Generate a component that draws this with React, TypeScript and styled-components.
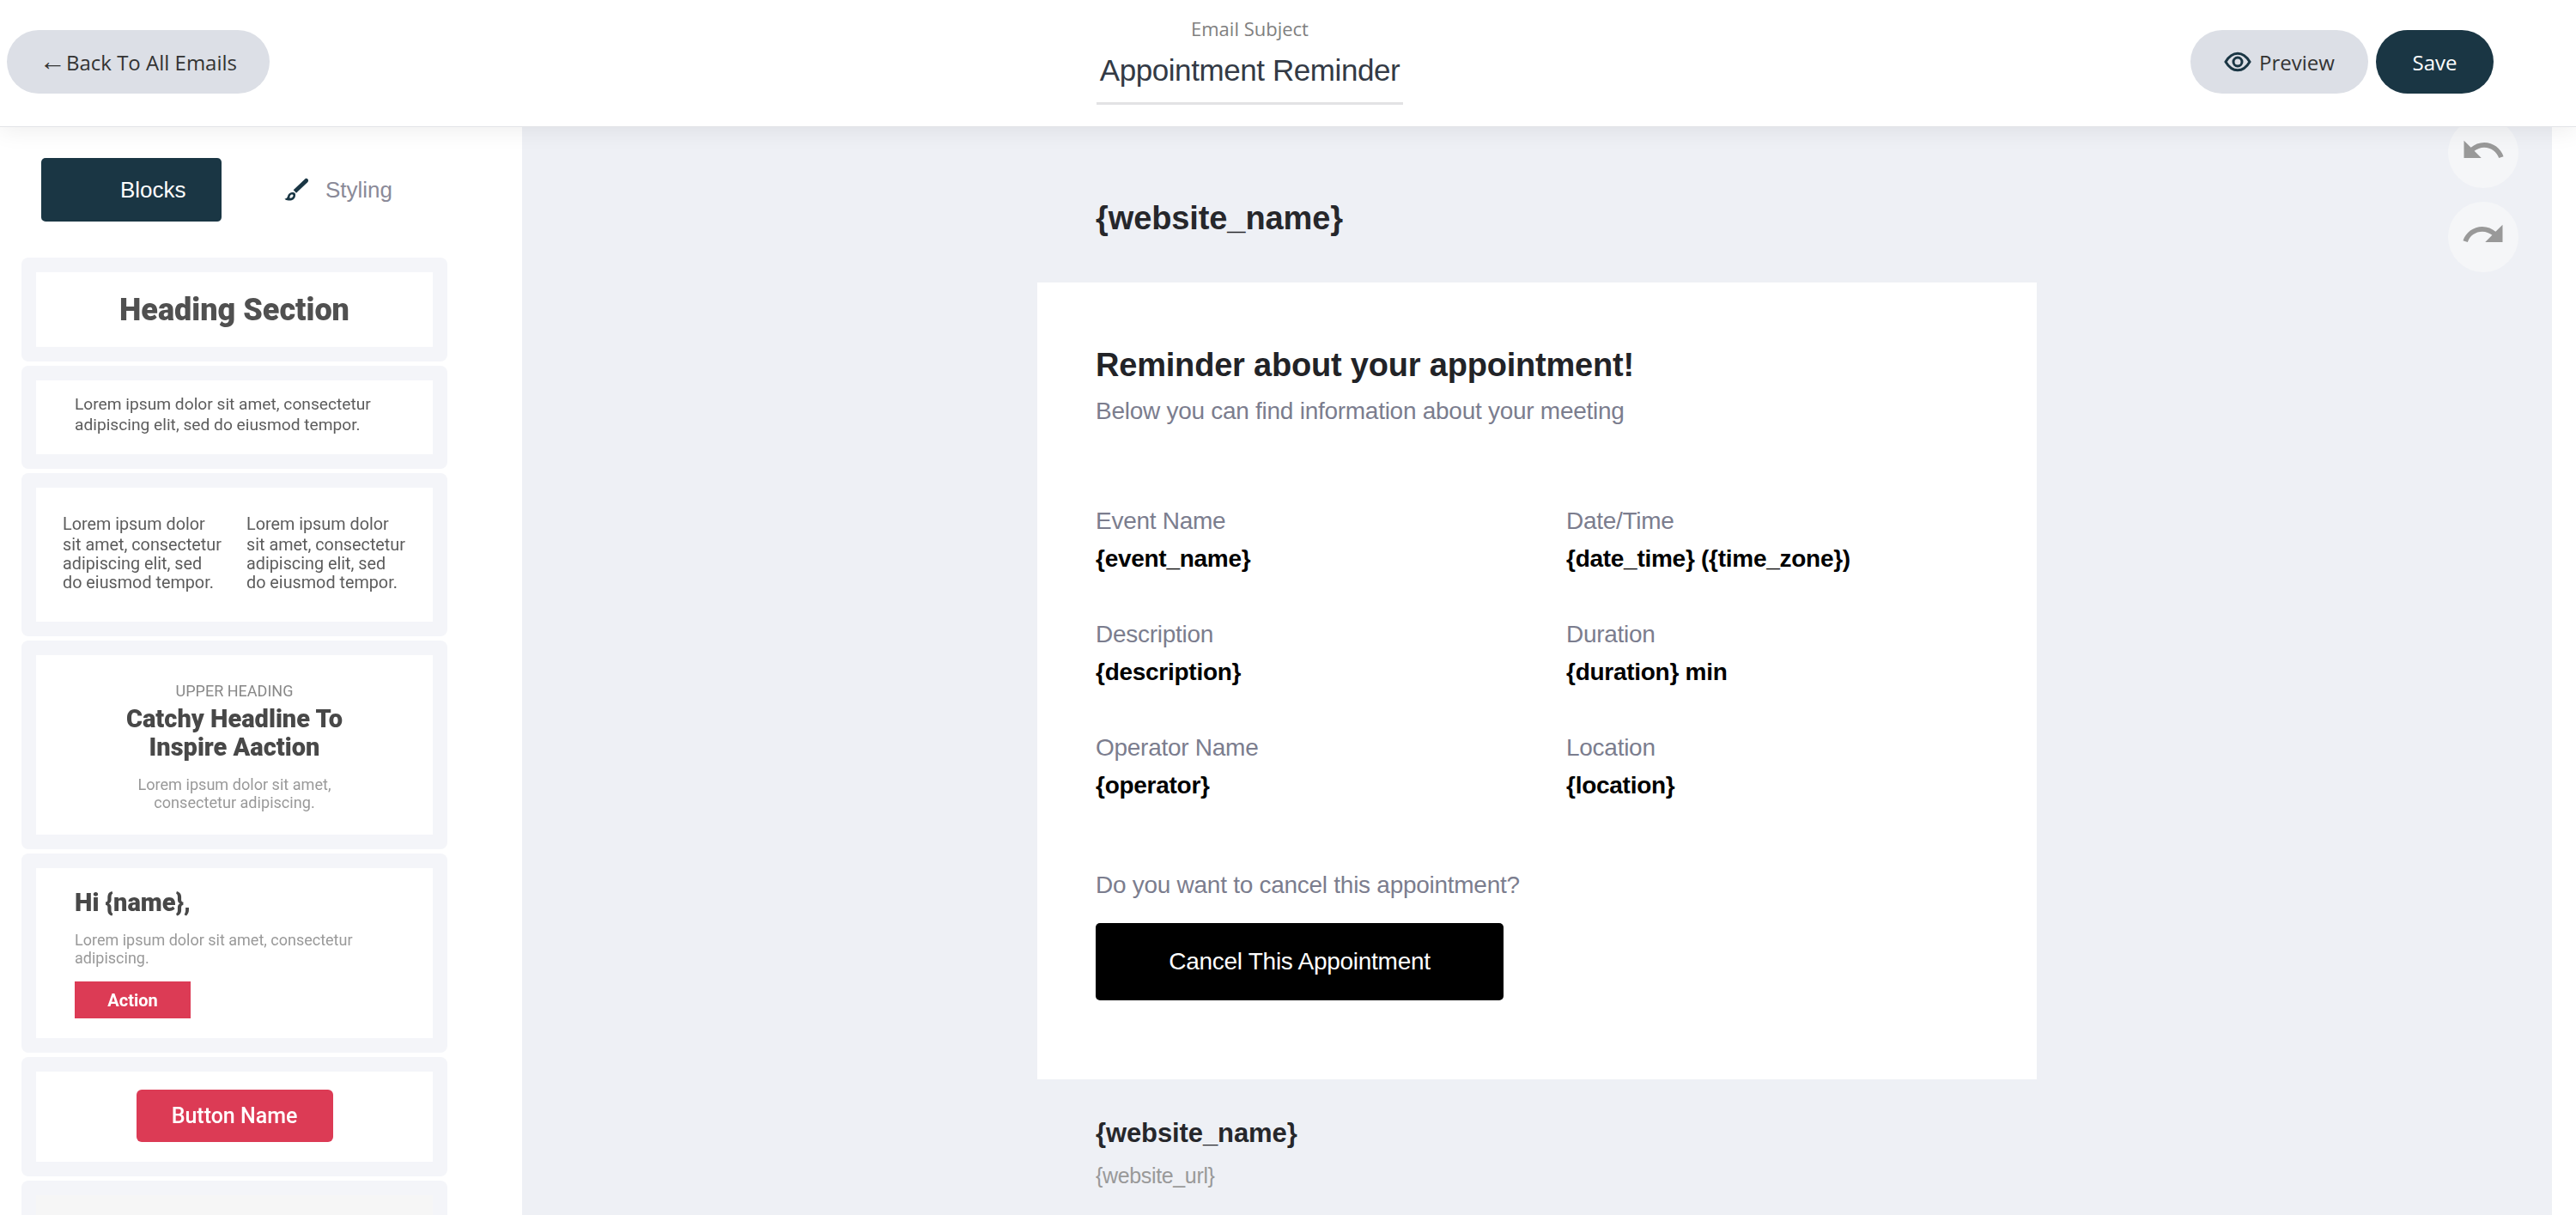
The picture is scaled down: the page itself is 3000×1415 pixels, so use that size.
import React from 'react';
import styled, { createGlobalStyle } from 'styled-components';
import { MdUndo, MdRedo } from 'react-icons/md';

const Global = createGlobalStyle`
  html, body { margin: 0; padding: 0; background: #fff; }
  * { box-sizing: border-box; }
`;

const Page = styled.div`
  width: 3000px; height: 1415px; overflow: hidden; display: flex; flex-direction: column;
  font-family: "Liberation Sans", Arial, sans-serif; background: #fff;
`;
const Header = styled.header`
  position: relative; z-index: 3; height: 148px; flex: none; background: #fff;
  border-bottom: 1px solid #e3e4e7; box-shadow: 0 4px 26px rgba(0,0,0,.07);
  display: grid; grid-template-columns: 1269px 357px 1fr; padding-left: 8px; align-items: start;
`;
const Pill = styled.button<{ $dark?: boolean; $w: number }>`
  width: ${p => p.$w}px; height: 74px; margin-top: 35px; border: 0; border-radius: 37px;
  background: ${p => (p.$dark ? '#1a3644' : '#dcdfe6')}; color: ${p => (p.$dark ? '#fff' : '#333')};
  font: 24px "Open Sans", sans-serif; display: flex; align-items: center; justify-content: center; gap: 9px; padding: 0;
`;
const Arrow = styled.span`font-family: "Liberation Sans", sans-serif; font-size: 31px; margin-right: -9px;`;
const BackCell = styled.div``;
const SubjectCell = styled.div`
  height: 122px; border-bottom: 3px solid #e2e2e4; text-align: center; display: flex; flex-direction: column;
`;
const SubjectLabel = styled.div`
  font: 22px/30px "Open Sans", sans-serif; color: #808080; margin-top: 18px;
`;
const SubjectValue = styled.div`
  font-size: 35px; line-height: 44px; color: #333a45; margin-top: 12px; white-space: nowrap; letter-spacing: -.42px;
`;
const Actions = styled.div`
  display: flex; justify-content: flex-end; gap: 9px; padding-right: 96px;
`;
const Body = styled.div`flex: 1; display: flex; min-height: 0;`;
const Sidebar = styled.aside`width: 608px; flex: none; background: #fff; padding: 36px 0 0 25px;`;
const Tabs = styled.div`display: flex; padding-left: 23px; margin-bottom: 42px; height: 74px;`;
const BlocksTab = styled.div`
  width: 210px; height: 74px; background: #1a3644; border-radius: 5px; color: #fff; font-size: 26px;
  display: flex; align-items: center; padding-left: 92px;
`;
const StylingTab = styled.div`
  display: flex; align-items: center; gap: 18px; margin-left: 73px; color: #8a8a98; font-size: 26px;
`;
const Cards = styled.div`display: flex; flex-direction: column; gap: 5px; width: 496px;`;
const Card = styled.div<{ $h: number }>`
  height: ${p => p.$h}px; background: #f4f5f9; border-radius: 8px; padding: 17px; flex: none;
`;
const CardInner = styled.div<{ $empty?: boolean }>`
  height: 100%; background: ${p => (p.$empty ? '#f6f6f6' : '#fff')}; color: #5c5c5c;
  font-family: Roboto, sans-serif; filter: blur(.6px);
`;
const HeadingThumb = styled(CardInner)`
  display: flex; align-items: center; justify-content: center; font-size: 36px; font-weight: 900; color: #505050;
`;
const TextThumb = styled(CardInner)`
  padding: 16px 0 0 45px; font-size: 19.2px; line-height: 24px;
`;
const Columns = styled(CardInner)`
  display: grid; grid-template-columns: 214px 1fr; padding: 32px 0 0 31px; font-size: 19.8px; line-height: 22px;
`;
const Line = styled.div<{ $gap?: boolean }>`white-space: nowrap; margin-bottom: ${p => (p.$gap ? 2 : 0)}px;`;
const HeroThumb = styled(CardInner)`text-align: center; padding-top: 31px;`;
const Upper = styled.div`font-size: 18px; line-height: 22px; color: #888;`;
const HeroTitle = styled.div`font-size: 29px; line-height: 33px; font-weight: 900; color: #484848; margin-top: 5px;`;
const HeroText = styled.div`font-size: 18.1px; line-height: 20.5px; color: #999; margin-top: 17px;`;
const GreetThumb = styled(CardInner)`padding: 22px 0 0 45px;`;
const Greet = styled.div`font-size: 29px; line-height: 36px; font-weight: 900; color: #484848;`;
const GreetText = styled.div`font-size: 18px; line-height: 21px; color: #999; margin-top: 15px;`;
const ActionBtn = styled.div`
  width: 135px; height: 43px; background: #dc3b55; color: #fff; font-size: 20px; font-weight: 700;
  display: flex; align-items: center; justify-content: center; margin-top: 17px;
`;
const ButtonThumb = styled(CardInner)`display: flex; justify-content: center; padding-top: 21px;`;
const ThumbBtn = styled.div`
  width: 229px; height: 61px; background: #dc3b55; color: #fff; font-size: 25px; font-weight: 500; border-radius: 6px;
  display: flex; align-items: center; justify-content: center;
`;
const Canvas = styled.main`
  position: relative; width: 2364px; flex: none; background: #eef0f5; display: flex; flex-direction: column; align-items: center;
`;
const Column = styled.div`width: 1164px;`;
const Brand = styled.div`
  padding: 78px 0 0 68px; height: 181px; font-size: 38px; line-height: 56px; font-weight: 700; color: #26272b; letter-spacing: -.1px;
`;
const Sheet = styled.section`background: #fff; height: 928px; padding: 72px 68px 0;`;
const Title = styled.h1`margin: 0; font-size: 38px; line-height: 48px; font-weight: 700; color: #222327; letter-spacing: -.2px;`;
const Lead = styled.p`margin: 8px 0 0; font-size: 28px; line-height: 44px; color: #7b7d8e; letter-spacing: -.27px;`;
const InfoGrid = styled.div`
  display: grid; grid-template-columns: 548px 1fr; row-gap: 44px; margin-top: 84px;
`;
const Info = styled.div``;
const InfoLabel = styled.div`font-size: 28px; line-height: 44px; color: #7b7d8e; letter-spacing: -.27px;`;
const InfoValue = styled.div`font-size: 28px; line-height: 44px; font-weight: 700; color: #000; white-space: nowrap; letter-spacing: -.27px;`;
const Ask = styled.p`margin: 72px 0 0; font-size: 28px; line-height: 44px; color: #7b7d8e; letter-spacing: -.27px;`;
const CancelBtn = styled.div`
  width: 475px; height: 90px; margin-top: 22px; background: #000; border-radius: 5px; color: #fff; font-size: 28px; letter-spacing: -.27px;
  display: flex; align-items: center; justify-content: center;
`;
const Foot = styled.footer`padding: 40px 0 0 68px;`;
const FootName = styled.div`font-size: 31px; line-height: 46px; font-weight: 700; color: #26272b; letter-spacing: -.1px;`;
const FootUrl = styled.div`font-size: 25px; line-height: 40px; color: #999; margin-top: 6px; letter-spacing: -.35px;`;
const Round = styled.button<{ $top: number }>`
  position: absolute; top: ${p => p.$top}px; left: 2243px; width: 82px; height: 82px; border-radius: 50%; border: 0;
  background: #f5f6f8; color: #999; display: flex; align-items: center; justify-content: center; padding: 0 0 6px;
`;

const Brush = () => (
  <svg width="30" height="30" viewBox="0 0 30 30" fill="#1a3644" aria-hidden="true">
    <path d="M10.7 15.3 24.7 2C26 1.2 27.6 2.2 28 3.7 28.2 4.6 27.8 5.4 27.2 6.2L14 18.7Z" />
    <path fillRule="evenodd" d="M9 18C12 17.5 13.5 19 13 22 12.5 26 9 28 5 27.5 3 27.3 1.5 27 .5 25.5 2.5 25.5 3.5 24.5 4 22.5 4.5 20 6.5 18.5 9 18ZM8.5 20.5C7 21 6.5 22.5 6.3 24.5 8 25 10 24 10.5 22 10.7 20.8 9.7 20.2 8.5 20.5Z" />
  </svg>
);

const Eye = () => (
  <svg width="32" height="24" viewBox="0 0 32 24" fill="none" stroke="#1a3644" strokeWidth="3" aria-hidden="true">
    <path d="M2 12C6 5.2 11 2.2 16 2.2S26 5.2 30 12C26 18.8 21 21.8 16 21.8S6 18.8 2 12Z" />
    <circle cx="16" cy="12" r="5" />
  </svg>
);

export default function App() {
  return (
    <Page>
      <Global />
      <Header>
        <BackCell><Pill $w={306}><Arrow>←</Arrow>Back To All Emails</Pill></BackCell>
        <SubjectCell>
          <SubjectLabel>Email Subject</SubjectLabel>
          <SubjectValue>Appointment Reminder</SubjectValue>
        </SubjectCell>
        <Actions>
          <Pill $w={207}><Eye />Preview</Pill>
          <Pill $dark $w={137}>Save</Pill>
        </Actions>
      </Header>
      <Body>
        <Sidebar>
          <Tabs>
            <BlocksTab>Blocks</BlocksTab>
            <StylingTab><Brush />Styling</StylingTab>
          </Tabs>
          <Cards>
            <Card $h={121}><HeadingThumb>Heading Section</HeadingThumb></Card>
            <Card $h={120}>
              <TextThumb><Line>Lorem ipsum dolor sit amet, consectetur</Line><Line>adipiscing elit, sed do eiusmod tempor.</Line></TextThumb>
            </Card>
            <Card $h={190}>
              <Columns>
                {[0, 1].map(i => (
                  <div key={i}>
                    <Line $gap>Lorem ipsum dolor</Line>
                    <Line>sit amet, consectetur</Line>
                    <Line>adipiscing elit, sed</Line>
                    <Line>do eiusmod tempor.</Line>
                  </div>
                ))}
              </Columns>
            </Card>
            <Card $h={243}>
              <HeroThumb>
                <Upper>UPPER HEADING</Upper>
                <HeroTitle>Catchy Headline To<br />Inspire Aaction</HeroTitle>
                <HeroText>Lorem ipsum dolor sit amet,<br />consectetur adipiscing.</HeroText>
              </HeroThumb>
            </Card>
            <Card $h={232}>
              <GreetThumb>
                <Greet>Hi {'{name}'},</Greet>
                <GreetText>Lorem ipsum dolor sit amet, consectetur<br />adipiscing.</GreetText>
                <ActionBtn>Action</ActionBtn>
              </GreetThumb>
            </Card>
            <Card $h={139}><ButtonThumb><ThumbBtn>Button Name</ThumbBtn></ButtonThumb></Card>
            <Card $h={80}><CardInner $empty /></Card>
          </Cards>
        </Sidebar>
        <Canvas>
          <Round $top={-11} aria-label="Undo"><MdUndo size={54} /></Round>
          <Round $top={87} aria-label="Redo"><MdRedo size={54} /></Round>
          <Column>
            <Brand>{'{website_name}'}</Brand>
            <Sheet>
              <Title>Reminder about your appointment!</Title>
              <Lead>Below you can find information about your meeting</Lead>
              <InfoGrid>
                <Info><InfoLabel>Event Name</InfoLabel><InfoValue>{'{event_name}'}</InfoValue></Info>
                <Info><InfoLabel>Date/Time</InfoLabel><InfoValue>{'{date_time} ({time_zone})'}</InfoValue></Info>
                <Info><InfoLabel>Description</InfoLabel><InfoValue>{'{description}'}</InfoValue></Info>
                <Info><InfoLabel>Duration</InfoLabel><InfoValue>{'{duration} min'}</InfoValue></Info>
                <Info><InfoLabel>Operator Name</InfoLabel><InfoValue>{'{operator}'}</InfoValue></Info>
                <Info><InfoLabel>Location</InfoLabel><InfoValue>{'{location}'}</InfoValue></Info>
              </InfoGrid>
              <Ask>Do you want to cancel this appointment?</Ask>
              <CancelBtn>Cancel This Appointment</CancelBtn>
            </Sheet>
            <Foot>
              <FootName>{'{website_name}'}</FootName>
              <FootUrl>{'{website_url}'}</FootUrl>
            </Foot>
          </Column>
        </Canvas>
      </Body>
    </Page>
  );
}
